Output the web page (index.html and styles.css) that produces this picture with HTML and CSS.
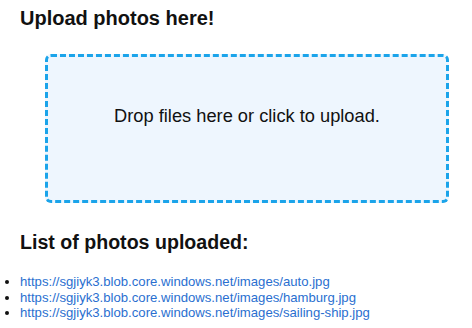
FILE: index.html
```html
<!DOCTYPE html>
<html lang="en">
<head>
  <meta charset="UTF-8" />
  <title>Upload photos</title>
  <link rel="stylesheet" href="styles.css">
</head>
<body>

<div class="section">
  <h2>Upload photos here!</h2>
  <div class="dropzone">
    <span>Drop files here or click to upload.</span>
  </div>
</div>

<div class="section">
  <h2 class="list-title">List of photos uploaded:</h2>
</div>
<ul class="photo-list">
  <li><a href="#">https://sgjiyk3.blob.core.windows.net/images/auto.jpg</a></li>
  <li><a href="#">https://sgjiyk3.blob.core.windows.net/images/hamburg.jpg</a></li>
  <li><a href="#">https://sgjiyk3.blob.core.windows.net/images/sailing-ship.jpg</a></li>
</ul>

</body>
</html>
```

FILE: styles.css
```css
* {
  box-sizing: border-box;
}
body {
  margin: 0;
  font-family: 'Liberation Sans', Arial, sans-serif;
  color: #111;
  background: #fff;
}
.section {
  padding: 0 20px;
}
h2 {
  margin: 0;
  padding-top: 6px;
  font-size: 20px;
  line-height: 24px;
}
.dropzone {
  margin: 24px 0 0 25px;
  width: 404px;
  height: 149px;
  padding-top: 48px;
  border: 3px dashed #1ba4ea;
  border-radius: 6px;
  background: #eef6fe;
  text-align: center;
  font-size: 18.25px;
  line-height: 21px;
  cursor: pointer;
}
.list-title {
  padding-top: 27px;
  font-size: 19.6px;
}
.photo-list {
  margin: 20px 0 0;
  padding-left: 20px;
  font-size: 13.15px;
  line-height: 15.5px;
}
.photo-list a {
  color: #2a6fd0;
  text-decoration: none;
}
```
